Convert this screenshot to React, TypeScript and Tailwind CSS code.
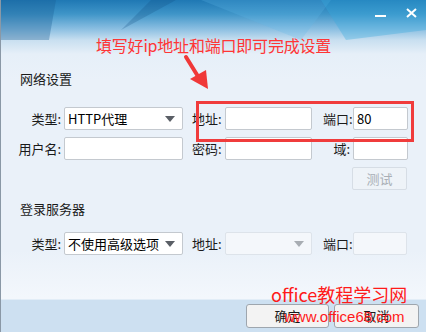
import React from 'react'

const font = { fontFamily: '"Microsoft YaHei", "Noto Sans CJK SC", "Noto Sans", sans-serif' }

function Field({ width, value, disabled }: { width: string; value?: string; disabled?: boolean }) {
  return (
    <div
      className={`${width} shrink-0 h-[23px] rounded-[2px] border flex items-center px-[3px] text-[13px] text-black ${
        disabled ? 'bg-[#f4f7fb] border-[#dde3ea]' : 'bg-white border-[#c4c9cf]'
      }`}
    >
      {value}
    </div>
  )
}

function Combo({ width, value, disabled }: { width: string; value?: string; disabled?: boolean }) {
  return (
    <div
      className={`${width} shrink-0 h-[23px] rounded-[2px] border flex items-center justify-between pl-[3px] pr-[7px] text-[13px] text-black whitespace-nowrap ${
        disabled ? 'bg-[#f4f7fb] border-[#dde3ea]' : 'bg-white border-[#c4c9cf]'
      }`}
    >
      <span>{value}</span>
      <svg width="10" height="6" viewBox="0 0 10 6">
        <path d="M0 0 L10 0 L5 6 Z" fill={disabled ? '#a8adb3' : '#5a5f66'} />
      </svg>
    </div>
  )
}

function Label({ children, className }: { children: React.ReactNode; className: string }) {
  return <span className={`shrink-0 whitespace-nowrap leading-[17px] ${className}`}>{children}</span>
}

export default function App() {
  return (
    <div
      className="relative w-[426px] h-[332px] overflow-hidden flex flex-col border-l border-[#8a98a6] text-[#1a1a1a]"
      style={font}
    >
      {/* 主体区域 */}
      <div className="relative flex-1 flex flex-col bg-[linear-gradient(to_bottom,#1f78b4_0px,#3f95c8_14px,#86bce0_28px,#c8dff0_40px,#e6eff8_54px,#eaf1f9_80px,#eaf1f9_250px,#f3f7fc_298px)]">
        {/* 标题栏装饰 */}
        <svg className="absolute left-0 top-0" width="426" height="60" viewBox="0 0 426 60">
          <polygon points="0,0 55,0 48,40 0,40" fill="#1a5f96" opacity="0.35" />
          <polygon points="150,0 175,0 120,30" fill="#0f4d80" opacity="0.25" />
          <polygon points="200,0 330,0 300,40" fill="#5fb6e6" opacity="0.25" />
          <polygon points="320,0 426,0 426,30 345,40" fill="#37a8dc" opacity="0.35" />
        </svg>

        {/* 窗口按钮 */}
        <div className="relative flex justify-end items-start h-[30px] pr-[9px]">
          <div className="mt-[15px] w-[11px] h-[2px] bg-white" />
          <svg className="ml-[20px] mt-[8px]" width="11" height="10" viewBox="0 0 11 10">
            <path d="M1 1 L10 9 M10 1 L1 9" stroke="white" strokeWidth="2" />
          </svg>
        </div>

        {/* 网络设置 */}
        <div className="relative pl-[19px] mt-[40px] text-[13px] leading-[17px]">网络设置</div>

        <div className="relative flex flex-col gap-[7px] mt-[20px] text-[13px]">
          <div className="flex items-center">
            <Label className="w-[60px] text-right">类型:</Label>
            <div className="ml-[3px]"><Combo width="w-[119px]" value="HTTP代理" /></div>
            <Label className="ml-[9px] w-[30px]">地址:</Label>
            <div className="ml-[3px]"><Field width="w-[87px]" /></div>
            <Label className="ml-[11px] w-[27px] text-right">端口:</Label>
            <div className="ml-[3px]"><Field width="w-[55px]" value="80" /></div>
          </div>
          <div className="flex items-center">
            <Label className="w-[60px] text-right">用户名:</Label>
            <div className="ml-[3px]"><Field width="w-[119px]" /></div>
            <Label className="ml-[9px] w-[30px]">密码:</Label>
            <div className="ml-[3px]"><Field width="w-[87px]" /></div>
            <Label className="ml-[11px] w-[27px] text-right">域:</Label>
            <div className="ml-[3px]"><Field width="w-[55px]" /></div>
          </div>
          <div className="flex pl-[351px]">
            <div className="w-[55px] h-[23px] rounded-[2px] border border-[#d6dde5] bg-[#eef3f8] flex items-center justify-center text-[13px] text-[#a9afb6]">
              测试
            </div>
          </div>
        </div>

        {/* 登录服务器 */}
        <div className="relative pl-[19px] mt-[10px] text-[13px] leading-[17px]">登录服务器</div>

        <div className="relative flex items-center mt-[15px] text-[13px]">
          <Label className="w-[60px] text-right">类型:</Label>
          <div className="ml-[3px]"><Combo width="w-[119px]" value="不使用高级选项" /></div>
          <Label className="ml-[9px] w-[30px]">地址:</Label>
          <div className="ml-[3px]"><Combo width="w-[87px]" disabled /></div>
          <Label className="ml-[11px] w-[27px] text-right">端口:</Label>
          <div className="ml-[3px]"><Field width="w-[54px]" disabled /></div>
        </div>
      </div>

      {/* 底部按钮栏 */}
      <div className="h-[33px] shrink-0 bg-[#cde0f1] border-t border-[#e2edf7] flex items-start justify-end gap-[5px] pr-[7px] pt-[4px]">
        <button className="w-[83px] h-[24px] rounded-[3px] border border-[#9ea6ae] bg-[#f3f3f3] text-[13px]">确定</button>
        <button className="w-[85px] h-[24px] rounded-[3px] border border-[#9ea6ae] bg-[#f3f3f3] text-[13px]">取消</button>
      </div>

      {/* 标注 */}
      <div className="absolute left-[95px] top-[35px] text-[16px] leading-[20px] text-[#ff3535] tracking-[-0.2px] whitespace-nowrap">
        填写好ip地址和端口即可完成设置
      </div>
      <svg className="absolute left-[180px] top-[52px]" width="34" height="42" viewBox="0 0 34 42">
        <path d="M5 5 L18 26" stroke="#f03838" strokeWidth="4" strokeLinecap="round" />
        <polygon points="9,27 25,18 27,37" fill="#f03838" />
      </svg>
      <div className="absolute left-[195px] top-[101px] w-[218px] h-[41px] border-[3px] border-[#f03c3c]" />

      {/* 水印 */}
      <div className="absolute left-[270px] top-[283px] text-[18px] leading-[22px] text-[#ff1a1a] whitespace-nowrap">office教程学习网</div>
      <div
        className="absolute left-[283px] top-[308px] text-[15px] leading-[18px] text-[#ff1a1a] whitespace-nowrap"
        style={{ fontFamily: 'Arial, "Liberation Sans", sans-serif' }}
      >
        www.office68.com
      </div>
    </div>
  )
}
